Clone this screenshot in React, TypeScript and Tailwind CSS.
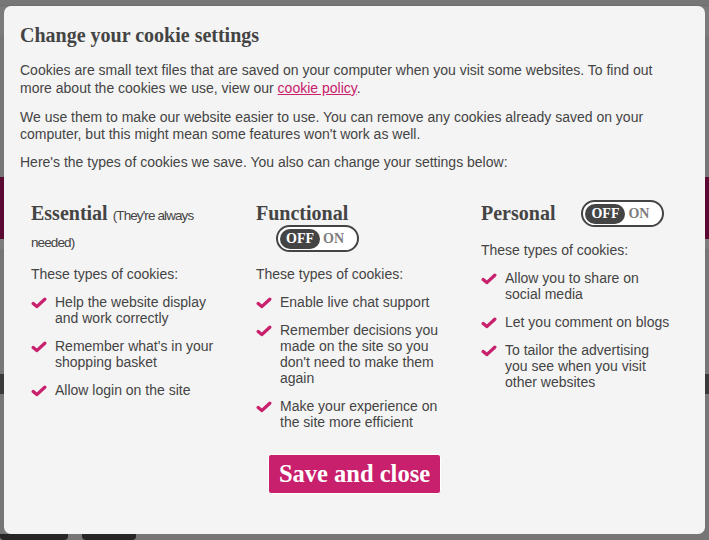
import type { ReactNode } from 'react';

const serif = "font-['Liberation_Serif','Times_New_Roman',serif]";

function Check() {
    return (
        <svg width="16" height="12" viewBox="0 0 16 12" className="mt-[3px] shrink-0">
            <path d="M2.2 6.6 L5.8 9.6 L13.8 2.2" fill="none" stroke="#c8206c" strokeWidth="3.3" strokeLinecap="round" strokeLinejoin="round" />
        </svg>
    );
}

function Toggle() {
    return (
        <div className={`flex h-[27px] w-[83px] items-center rounded-full border-2 border-[#444] bg-white px-[2px] ${serif} text-[14px] font-bold`}>
            <div className="flex h-[20px] w-[40px] items-center rounded-full bg-[#444] pl-[6px] text-white">OFF</div>
            <span className="ml-[3px] text-[#7d7d7d]">ON</span>
        </div>
    );
}

function List({ items }: { items: string[] }) {
    return (
        <ul className="mt-[11px] flex flex-col gap-[12px]">
            {items.map((t) => (
                <li key={t} className="flex gap-[8px]">
                    <Check />
                    <span className="w-[170px] leading-[16px]">{t}</span>
                </li>
            ))}
        </ul>
    );
}

function Column({ head, items, topGap }: { head: ReactNode; items: string[]; topGap: string }) {
    return (
        <div>
            {head}
            <p className={`${topGap} leading-[18px]`}>These types of cookies:</p>
            <List items={items} />
        </div>
    );
}

export default function App() {
    return (
        <div className="relative h-[540px] w-full overflow-hidden bg-[#767676] font-['Liberation_Sans',Arial,sans-serif]">
            {/* dimmed page behind the dialog */}
            <div className="flex h-[6px] w-full border-b border-[#6e6e6e]" />
            <div className="h-[30px] w-full bg-[#7b7b7b]" />
            <div className="h-[141px] w-full bg-[#767676]" />
            <div className="h-[62px] w-full bg-[#5a0a32]" />
            <div className="h-[10px] w-full bg-[#7d7d7d]" />
            <div className="h-[125px] w-full bg-[#767676]" />
            <div className="h-[20px] w-full bg-[#3a3a3a]" />
            <div className="flex h-[146px] w-full items-end gap-[14px] bg-[#767676]">
                <div className="h-[6px] w-[68px] rounded-b bg-[#262626]" />
                <div className="h-[6px] w-[54px] rounded-b bg-[#262626]" />
            </div>

            <div className="absolute left-[4px] right-[4px] top-[6px] rounded-[7px] bg-[#f4f4f4] px-[16px] pb-[40px] pt-[17px] text-[14px] text-[#444]">
                <h2 className={`${serif} text-[20px] font-bold leading-[24px]`}>Change your cookie settings</h2>
                <p className="mt-[14px] max-w-[658px] leading-[18px]">
                    Cookies are small text files that are saved on your computer when you visit some websites. To find out more about the cookies we use, view our{' '}
                    <a className="text-[#c8206c] underline">cookie policy</a>.
                </p>
                <p className="mt-[12px] max-w-[658px] leading-[17px]">
                    We use them to make our website easier to use. You can remove any cookies already saved on your computer, but this might mean some features won't work as well.
                </p>
                <p className="mt-[10px] leading-[18px]">Here's the types of cookies we save. You also can change your settings below:</p>

                <div className="mt-[29px] grid grid-cols-[194px_194px_194px] gap-x-[31px] pl-[11px]">
                    <Column
                        topGap="mt-[11px]"
                        head={
                            <h3 className={`${serif} text-[20px] font-bold leading-[27px]`}>
                                Essential{' '}
                                <span className="font-['Liberation_Sans',Arial,sans-serif] text-[13.5px] font-normal leading-[16px] tracking-[-0.9px]">
                                    (They're always needed)
                                </span>
                            </h3>
                        }
                        items={['Help the website display and work correctly', "Remember what's in your shopping basket", 'Allow login on the site']}
                    />
                    <Column
                        topGap="mt-[13px]"
                        head={
                            <div>
                                <h3 className={`${serif} text-[20px] font-bold leading-[27px]`}>Functional</h3>
                                <div className="-mt-[2px] ml-[20px]">
                                    <Toggle />
                                </div>
                            </div>
                        }
                        items={[
                            'Enable live chat support',
                            "Remember decisions you made on the site so you don't need to make them again",
                            'Make your experience on the site more efficient',
                        ]}
                    />
                    <Column
                        topGap="mt-[14px]"
                        head={
                            <div className="flex items-center gap-[26px]">
                                <h3 className={`${serif} text-[20px] font-bold leading-[27px]`}>Personal</h3>
                                <Toggle />
                            </div>
                        }
                        items={['Allow you to share on social media', 'Let you comment on blogs', 'To tailor the advertising you see when you visit other websites']}
                    />
                </div>

                <div className="mt-[24px] flex justify-center">
                    <button className={`h-[40px] rounded-[3px] border border-white bg-[#c8206c] px-[10px] ${serif} text-[24.5px] font-bold leading-[38px] text-white`}>
                        Save and close
                    </button>
                </div>
            </div>
        </div>
    );
}
